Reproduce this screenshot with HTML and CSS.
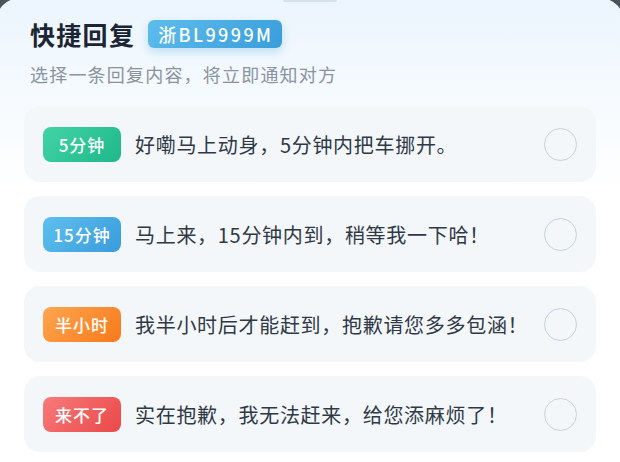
FILE: index.html
```html
<!DOCTYPE html>
<html lang="zh-CN">
<head>
  <meta charset="UTF-8">
  <title>快捷回复</title>
  <link rel="stylesheet" href="styles.css">
</head>
<body>
  <div class="sheet">
    <div class="handle"></div>

    <div class="head">
      <div class="title-row">
        <h2 class="title">快捷回复</h2>
        <span class="plate">浙BL9999M</span>
      </div>
      <p class="hint">选择一条回复内容，将立即通知对方</p>
    </div>

    <ul class="replies">
      <li class="reply">
        <span class="tag green">5分钟</span>
        <span class="text">好嘞马上动身，5分钟内把车挪开。</span>
        <span class="radio"></span>
      </li>
      <li class="reply">
        <span class="tag blue">15分钟</span>
        <span class="text">马上来，15分钟内到，稍等我一下哈！</span>
        <span class="radio"></span>
      </li>
      <li class="reply">
        <span class="tag orange">半小时</span>
        <span class="text">我半小时后才能赶到，抱歉请您多多包涵！</span>
        <span class="radio"></span>
      </li>
      <li class="reply">
        <span class="tag red">来不了</span>
        <span class="text">实在抱歉，我无法赶来，给您添麻烦了！</span>
        <span class="radio"></span>
      </li>
    </ul>
  </div>
</body>
</html>
```

FILE: styles.css
```css
body { margin: 0; background: #4a525c; font-family: "Noto Sans CJK SC", "Noto Sans", sans-serif; overflow: hidden; }

.sheet { margin: -8px -4px 0; min-height: 480px; padding: 0 28px; border-radius: 24px 24px 0 0; background: linear-gradient(180deg, #ebf5fd 0, #f5fafe 95px, #ffffff 200px); }
.handle { width: 54px; height: 4px; margin: 6px auto 0; border-radius: 2px; background: #d3e2ee; }

.head { padding: 0 6px; }
.title-row { display: flex; align-items: center; gap: 13px; margin-top: 17px; }
.title { margin: 0; font-size: 25px; line-height: 30px; font-weight: 700; letter-spacing: 1.3px; color: #1b2533; }
.plate { height: 28px; line-height: 28px; padding: 0 9px 0 10px; border-radius: 6px; font-size: 18px; font-weight: 500; letter-spacing: 2.4px; color: #fff; background: linear-gradient(135deg, #5dbdec, #3a9ddb); box-shadow: 0 4px 10px rgba(58, 157, 219, 0.28); }
.hint { margin: 13px 0 0; font-size: 18px; line-height: 24px; letter-spacing: 1.2px; color: #8a939e; }

.replies { list-style: none; margin: 20px 0 0; padding: 0; display: flex; flex-direction: column; gap: 14px; }
.reply { display: flex; align-items: center; height: 76px; padding: 0 19px; border-radius: 16px; background: #f4f7fa; }
.tag { width: 78px; height: 35px; line-height: 35px; flex: none; text-align: center; border-radius: 8px; font-size: 17px; font-weight: 500; letter-spacing: 1px; color: #fff; }
.tag.green { background: linear-gradient(135deg, #42d3a5, #1eb88a); }
.tag.blue { background: linear-gradient(135deg, #5ec0ee, #399bdb); }
.tag.orange { background: linear-gradient(135deg, #ffa650, #f7791b); }
.tag.red { background: linear-gradient(135deg, #f87a7a, #ea4848); }
.text { flex: 1; margin-left: 14px; font-size: 20px; letter-spacing: 0.7px; color: #2f3946; white-space: nowrap; }
.radio { width: 31px; height: 31px; flex: none; border: 1.5px solid #c6d1db; border-radius: 50%; }
```
